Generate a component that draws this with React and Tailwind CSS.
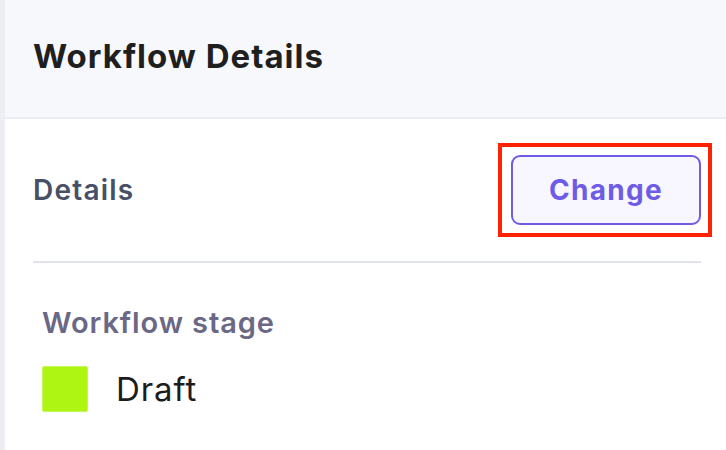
import React from 'react';

const App = () => {
  return (
    <div className="flex w-[726px] h-[450px] overflow-hidden bg-white font-['Inter','Liberation_Sans',sans-serif]">
      <div className="w-[5px] shrink-0 bg-[#eceef3]" />
      <div className="flex-1 flex flex-col">
        <header className="h-[119px] shrink-0 flex items-center pl-[28px] pb-[4px] bg-[#f7f8fc] border-b-2 border-[#e9ecf3]">
          <h1 className="text-[33px] font-bold text-[#1f1f1f] tracking-[1px]">Workflow Details</h1>
        </header>
        <div className="pl-[28px] pr-[25px]">
          <div className="flex items-center justify-between h-[144px] border-b-2 border-[#e0e2ec]">
            <h2 className="text-[28px] font-semibold text-[#475066] tracking-[1.2px]">Details</h2>
            <div className="relative">
              <button className="w-[190px] h-[70px] rounded-[9px] border-2 border-[#6e5ce6] bg-[#f8f7ff] text-[28px] font-bold text-[#6e5ce6] tracking-[1.3px]">
                Change
              </button>
              <span className="absolute -top-[12px] -bottom-[12px] -left-[13px] -right-[11px] border-4 border-[#ff2200] pointer-events-none" />
            </div>
          </div>
          <div className="pl-[9px] pt-[38px]">
            <div className="text-[29px] font-semibold text-[#6b6886] tracking-[0.9px]">Workflow stage</div>
            <div className="flex items-center gap-[28px] mt-[20px]">
              <span className="w-[46px] h-[46px] rounded-[2px] bg-[#aff514] border border-[#c4f75a]" />
              <span className="text-[33px] text-[#1c1c1c] tracking-[0.9px]">Draft</span>
            </div>
          </div>
        </div>
      </div>
    </div>
  );
};

export default App;
